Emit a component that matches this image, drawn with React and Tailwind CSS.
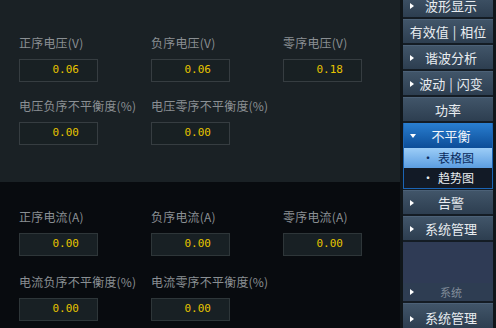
import React from 'react'

const font = { fontFamily: '"Noto Sans CJK SC", "Noto Sans", sans-serif' }

function Field({ label, value, dark }) {
    return (
        <div className="flex flex-col w-[79px]">
            <div className="text-[12px] leading-[12px] text-[#8a8f93] whitespace-nowrap tracking-[0.2px]">{label}</div>
            <div
                className={`mt-[10px] h-[23px] border flex items-center justify-end pr-[18px] ${dark ? 'bg-[#182024] border-[#2e3639]' : 'bg-[#182023] border-[#363d41]'}`}
            >
                <span className="text-[11px] text-[#e6c400] font-['DejaVu_Sans_Mono',monospace]">{value}</span>
            </div>
        </div>
    )
}

function Arrow() {
    return <span className="absolute left-[7px] top-1/2 -translate-y-1/2 w-0 h-0 border-y-[3px] border-y-transparent border-l-[4px] border-l-white" />
}

function Btn({ text, arrow }) {
    return (
        <div className="relative h-[24px] mb-[2px] flex items-center justify-center bg-gradient-to-b from-[#415569] to-[#2d3e50] text-[13px] text-[#e8ecf0] border-t border-[#4c6177]">
            {arrow && <Arrow />}
            <span className={arrow ? 'pl-[6px]' : ''}>{text}</span>
        </div>
    )
}

function Pair({ a, b }) {
    return (
        <span className="flex items-center">
            {a}
            <span className="mx-[4px]">|</span>
            {b}
        </span>
    )
}

export default function App() {
    return (
        <div className="w-[496px] h-[328px] flex bg-[#10161a] overflow-hidden" style={font}>
            <div className="w-[400px] h-full flex flex-col">
                <div className="h-[182px] bg-[#1a2125] pt-[37px] pl-[19px] flex flex-col gap-[18px]">
                    <div className="flex gap-[53px]">
                        <Field label="正序电压(V)" value="0.06" />
                        <Field label="负序电压(V)" value="0.06" />
                        <Field label="零序电压(V)" value="0.18" />
                    </div>
                    <div className="flex gap-[53px]">
                        <Field label="电压负序不平衡度(%)" value="0.00" />
                        <Field label="电压零序不平衡度(%)" value="0.00" />
                    </div>
                </div>
                <div className="flex-1 bg-[#080b0f] pt-[29px] pl-[19px] flex flex-col gap-[20px]">
                    <div className="flex gap-[53px]">
                        <Field dark label="正序电流(A)" value="0.00" />
                        <Field dark label="负序电流(A)" value="0.00" />
                        <Field dark label="零序电流(A)" value="0.00" />
                    </div>
                    <div className="flex gap-[53px]">
                        <Field dark label="电流负序不平衡度(%)" value="0.00" />
                        <Field dark label="电流零序不平衡度(%)" value="0.00" />
                    </div>
                </div>
            </div>
            <div className="ml-[3px] w-[90px] h-full flex flex-col bg-[#141c24]">
                <div className="-mt-[7px] shrink-0">
                    <Btn text="波形显示" arrow />
                    <Btn text={<Pair a="有效值" b="相位" />} />
                    <Btn text="谐波分析" arrow />
                    <Btn text={<Pair a="波动" b="闪变" />} arrow />
                    <Btn text="功率" />
                    <div className="border border-[#1b64b4] border-t-0 mb-[1px]">
                        <div className="relative h-[25px] flex items-center justify-center bg-gradient-to-b from-[#2a7fd0] to-[#0c4d98] text-[13px] text-[#eef4fa]">
                            <span className="absolute left-[6px] top-1/2 -translate-y-1/2 w-0 h-0 border-x-[3px] border-x-transparent border-t-[4px] border-t-white" />
                            <span className="pl-[6px]">不平衡</span>
                        </div>
                        <div className="h-[20px] flex items-center justify-center bg-gradient-to-b from-[#9ccdf7] to-[#5b9de0] text-[12px] text-[#0b2c5e]">
                            <span className="mr-[4px]">·</span>表格图
                        </div>
                        <div className="h-[20px] flex items-center justify-center bg-[#121a26] text-[12px] text-[#e8ecf0]">
                            <span className="mr-[4px]">·</span>趋势图
                        </div>
                    </div>
                    <Btn text="告警" arrow />
                    <Btn text="系统管理" arrow />
                </div>
                <div className="flex-1 bg-[#2f3b55] flex flex-col justify-end">
                    <div className="relative h-[18px] flex items-center justify-center bg-[#2e3d52] text-[11px] text-[#a4aeb8]">
                        <Arrow />
                        <span className="pl-[6px] opacity-70">系统</span>
                    </div>
                </div>
                <div className="h-[2px] shrink-0 bg-[#141c24]" />
                <div className="relative h-[25px] shrink-0 pt-[4px] flex items-center justify-center bg-gradient-to-b from-[#415569] to-[#2d3e50] text-[13px] text-[#e8ecf0] border-t border-[#4c6177]">
                    <span className="absolute left-[7px] top-[12px] w-0 h-0 border-y-[3px] border-y-transparent border-l-[4px] border-l-white" />
                    <span className="pl-[6px]">系统管理</span>
                </div>
            </div>
            <div className="w-[3px] bg-[#10161a]" />
        </div>
    )
}
